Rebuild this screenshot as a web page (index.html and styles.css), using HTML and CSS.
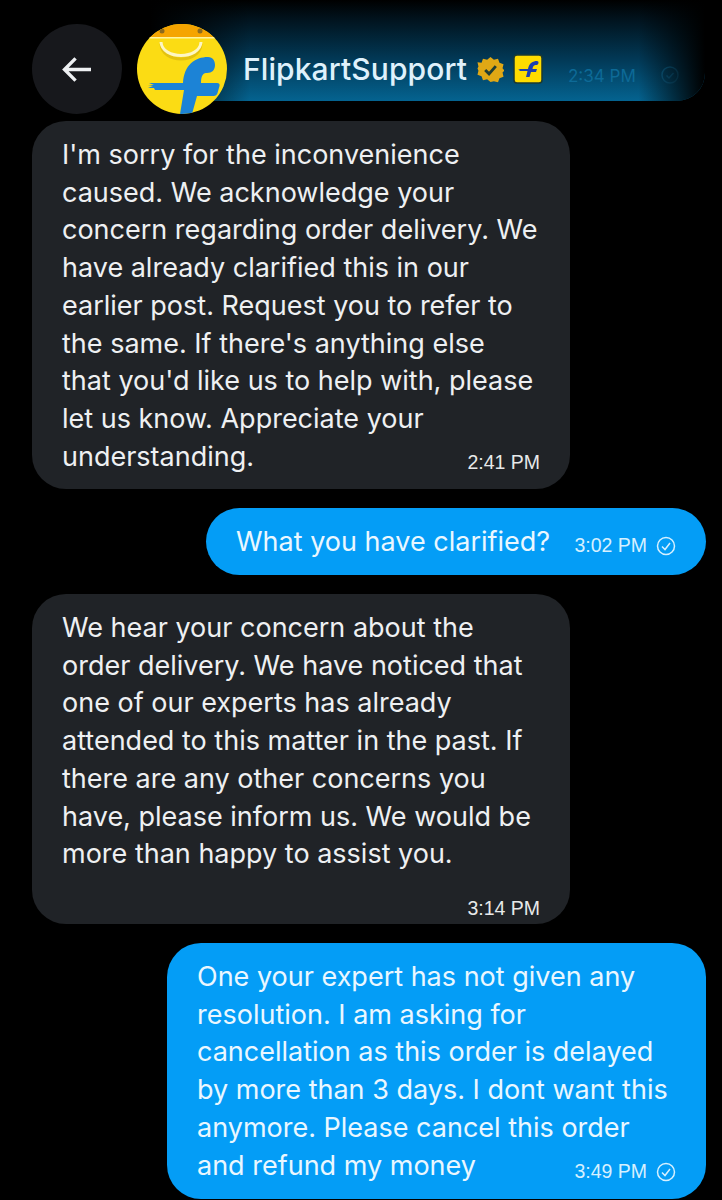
FILE: index.html
```html
<!DOCTYPE html>
<html lang="en">
<head>
  <meta charset="UTF-8" />
  <meta name="viewport" content="width=device-width, initial-scale=1.0"/>
  <title>FlipkartSupport</title>
  <link rel="stylesheet" href="styles.css">
</head>
<body>
  <div class="header">
    <div class="glow">
      <span class="ghost-time">2:34 PM</span>
      <svg class="ghost-check" viewBox="0 0 20 20"><circle cx="10" cy="10" r="8"/><path d="M6.5 10.5l2.5 2.5 4.5-5"/></svg>
    </div>
    <div class="back">
      <svg viewBox="0 0 32 28" class="back-icon"><path d="M30 14H3M14 2.500L2.500 14 14 25.500"/></svg>
    </div>
    <svg class="avatar" viewBox="0 0 90 90">
      <defs><clipPath id="round"><circle cx="45" cy="45" r="45"/></clipPath></defs>
      <g clip-path="url(#round)">
        <rect width="90" height="90" fill="#fbdc14"/>
        <rect width="90" height="14" fill="#f5a400"/>
        <rect y="13" width="90" height="1.500" fill="#fff3a0"/>
        <circle cx="25" cy="7" r="2.500" fill="#8a6a20"/>
        <circle cx="63" cy="7" r="2.500" fill="#8a6a20"/>
        <path d="M24 18c1 20 39 20 40 0" fill="none" stroke="#e3c210" stroke-width="3" transform="translate(0 2)"/>
        <path d="M24 18c1 18 39 18 40 0" fill="none" stroke="#fdf6c4" stroke-width="3"/>
        <path d="M43 90l4-24H18l-1-2h-6l5-2-5-1h6l-5-2 22 0 12 0c1-18 12-26 25-26 5 0 7 4 7 8 0 5-3 8-8 8-3 0-6 1-6 10h16c2 0 3 1 2.500 3l-2 7c-.5 2-2 3-4 3H60l-5 18z" fill="#1c83d6"/>
      </g>
    </svg>
    <span class="name">FlipkartSupport</span>
    <svg class="verified" viewBox="0 0 28 28">
      <path d="M14 1l3.500 2.800 4.300-1 1.500 4.200 4.200 1.500-1 4.300 2 2.200-2 2.200 1 4.300-4.200 1.500-1.500 4.200-4.300-1L14 27l-3.500-2.800-4.300 1-1.500-4.200-4.200-1.500 1-4.300-1-2.200 1-2.200-1-4.300L4.700 7l1.500-4.200 4.300 1z" fill="#e0a815"/>
      <path d="M8.500 14.500l4 4 7-8" fill="none" stroke="#1f3d36" stroke-width="3"/>
    </svg>
    <svg class="badge" viewBox="0 0 30 30">
      <rect x="1" y="1" width="28" height="28" rx="3" fill="#ffdc00" stroke="#1d3a30" stroke-width="1.500"/>
      <path d="M13 23l1.500-6H6l1-1H5l2-1 8 0c1-6 5-8 9-8 2 0 2 3 0 4-2 0-4 0-4.500 4H24l-1 3h-5l-1.500 5z" fill="#1c3fb0"/>
    </svg>
  </div>

  <div class="chat">
    <div class="bubble them first">
      <p class="text">I'm sorry for the inconvenience<br>caused. We acknowledge your<br>concern regarding order delivery. We<br>have already clarified this in our<br>earlier post. Request you to refer to<br>the same. If there's anything else<br>that you'd like us to help with, please<br>let us know. Appreciate your<br>understanding.</p>
      <div class="meta overlap"><span class="time">2:41 PM</span></div>
    </div>

    <div class="bubble me one-line">
      <p class="text">What you have clarified?</p>
      <div class="meta">
        <span class="time">3:02 PM</span>
        <svg class="check" viewBox="0 0 20 20"><circle cx="10" cy="10" r="8.500"/><path d="M6 10.500l3 3 5-6.500"/></svg>
      </div>
    </div>

    <div class="bubble them second">
      <p class="text">We hear your concern about the<br>order delivery. We have noticed that<br>one of our experts has already<br>attended to this matter in the past. If<br>there are any other concerns you<br>have, please inform us. We would be<br>more than happy to assist you.</p>
      <div class="meta"><span class="time">3:14 PM</span></div>
    </div>

    <div class="bubble me last">
      <p class="text">One your expert has not given any<br>resolution. I am asking for<br>cancellation as this order is delayed<br>by more than 3 days. I dont want this<br>anymore. Please cancel this order<br>and refund my money</p>
      <div class="meta overlap">
        <span class="time">3:49 PM</span>
        <svg class="check" viewBox="0 0 20 20"><circle cx="10" cy="10" r="8.500"/><path d="M6 10.500l3 3 5-6.500"/></svg>
      </div>
    </div>
  </div>
</body>
</html>
```

FILE: styles.css
```css
html, body {
  margin: 0;
  padding: 0;
}
body {
  background: #000;
  font-family: Inter, "Liberation Sans", sans-serif;
  width: 722px;
  height: 1200px;
  overflow: hidden;
  position: relative;
}
.header {
  position: relative;
  display: flex;
  align-items: center;
  height: 90px;
  padding: 24px 0 0 32px;
}
.glow {
  position: absolute;
  left: 150px;
  top: 0;
  width: 555px;
  height: 101px;
  border-radius: 0 0 28px 0;
  background: linear-gradient(180deg, #000 0%, #01141f 20%, #023a58 60%, #046390 100%);
  display: flex;
  align-items: center;
}
.glow::after {
  content: "";
  position: absolute;
  inset: 0;
  border-radius: 0 0 28px 0;
  background: linear-gradient(90deg, #000 0%, rgba(0,0,0,0) 18%, rgba(0,0,0,0) 88%, #000 100%);
}
.ghost-time {
  position: absolute;
  left: 418px;
  top: 66px;
  font-size: 17px;
  color: #0d6a97;
}
.ghost-check {
  position: absolute;
  left: 510px;
  top: 65px;
  width: 20px;
  height: 20px;
  fill: none;
  stroke: #0d6a97;
  stroke-width: 1.500;
}
.back {
  position: relative;
  width: 90px;
  height: 90px;
  border-radius: 50%;
  background: #17181c;
  display: flex;
  align-items: center;
  justify-content: center;
  flex: none;
}
.back-icon {
  width: 31px;
  height: 27px;
  fill: none;
  stroke: #eef0f2;
  stroke-width: 3.500;
}
.avatar {
  position: relative;
  width: 90px;
  height: 90px;
  margin-left: 15px;
  flex: none;
}
.name {
  position: relative;
  margin-left: 16px;
  font-size: 30px;
  font-weight: 500;
  color: #dff1fb;
  letter-spacing: 0.1px;
}
.verified {
  position: relative;
  width: 27px;
  height: 27px;
  margin-left: 10px;
  flex: none;
}
.badge {
  position: relative;
  width: 30px;
  height: 30px;
  margin-left: 9px;
  flex: none;
}
.chat {
  display: flex;
  flex-direction: column;
  padding: 7px 16px 0 32px;
}
.bubble {
  box-sizing: border-box;
  border-radius: 34px;
  color: #eef0f2;
}
.text {
  margin: 0;
  font-size: 27px;
  line-height: 37.700px;
}
.them {
  background: #202327;
  width: 538px;
  padding: 15px 30px 0;
  align-self: flex-start;
}
.me {
  background: #049df6;
  color: #eaf7ff;
  align-self: flex-end;
  padding: 15px 30px 0;
}
.first {
  height: 368px;
}
.second {
  height: 330px;
  margin-top: 19px;
}
.one-line {
  display: flex;
  align-items: center;
  width: 500px;
  height: 67px;
  margin-top: 19px;
  padding: 0 30px;
}
.last {
  width: 539px;
  height: 256px;
  margin-top: 19px;
}
.meta {
  display: flex;
  align-items: center;
  justify-content: flex-end;
  gap: 9px;
  font-family: "Liberation Sans", Arial, sans-serif;
  font-size: 19.500px;
  color: #e7e9ea;
}
.me .meta {
  color: #d6f0ff;
}
.overlap {
  margin-top: -24px;
}
.second .meta {
  margin-top: 24px;
}
.one-line .meta {
  margin: 8px 0 0 auto;
}
.check {
  width: 20px;
  height: 20px;
  fill: none;
  stroke: #d6f0ff;
  stroke-width: 1.500;
}
```
